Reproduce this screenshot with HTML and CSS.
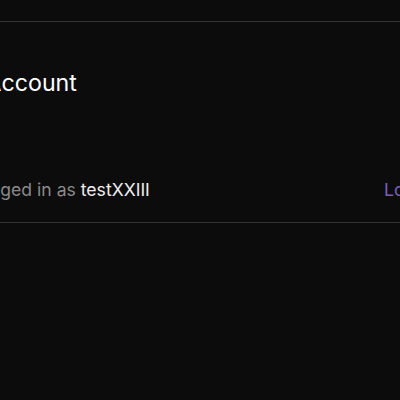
FILE: index.html
```html
<!DOCTYPE html>
<html>
<head>
<meta charset="utf-8">
<link rel="stylesheet" href="styles.css">
</head>
<body>
<div class="page">
  <section class="account">
    <h2 class="title">Account</h2>
    <div class="row">
      <p class="status">Logged in as <span class="user">testXXIII</span></p>
      <a class="logout" href="#">Log out</a>
    </div>
  </section>
</div>
</body>
</html>
```

FILE: styles.css
```css
html, body {
  margin: 0;
  padding: 0;
  background: #0c0c0c;
  overflow: hidden;
}
body {
  font-family: Inter, "Noto Sans", sans-serif;
  color: #fff;
  width: 400px;
  height: 400px;
}
.page {
  padding-top: 21px;
  margin-left: -40px;
  width: 480px;
}
.account {
  border-top: 1px solid #333;
  border-bottom: 1px solid #333;
  padding: 0 0 0 9px;
}
.title {
  margin: 0;
  padding: 47px 0 0 16.5px;
  font-size: 23.2px;
  font-weight: 400;
  line-height: 28px;
}
.row {
  display: flex;
  justify-content: space-between;
  align-items: center;
  padding: 81px 0 20px 0;
}
.status {
  margin: 0;
  font-size: 17.6px;
  line-height: 24px;
  color: #8a8a8a;
}
.user {
  color: #eee;
}
.logout {
  font-size: 17.6px;
  line-height: 24px;
  color: #7a5dc4;
  text-decoration: none;
  margin-right: -7px;
}
```
